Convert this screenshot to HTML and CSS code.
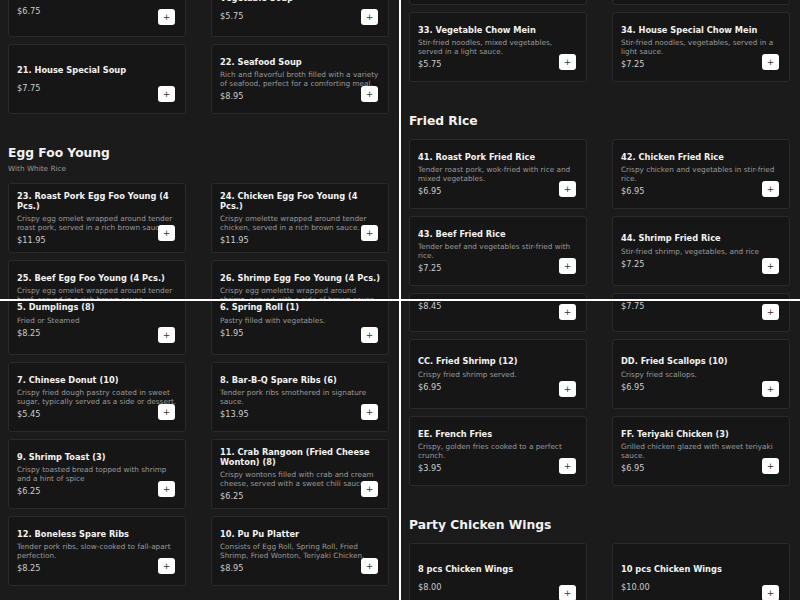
FILE: index.html
```html
<!DOCTYPE html>
<html lang="en">
<head>
  <meta charset="UTF-8" />
  <meta name="viewport" content="width=device-width, initial-scale=1.0" />
  <title>Menu</title>
  <link rel="stylesheet" href="styles.css">
</head>
<body>
  <main class="screens">

    <!-- soups / egg foo young -->
    <section class="screen screen--soup">
      <div class="menu">
        <div class="items">
          <article class="item">
            <h3 class="item-name">19. Hot and Sour Soup</h3>
            <p class="item-price">$6.75</p>
            <button class="add-btn" type="button">+</button>
          </article>
          <article class="item">
            <h3 class="item-name">20. Bean Curd and Mixed Vegetable Soup</h3>
            <p class="item-price">$5.75</p>
            <button class="add-btn" type="button">+</button>
          </article>
          <article class="item">
            <h3 class="item-name">21. House Special Soup</h3>
            <p class="item-price">$7.75</p>
            <button class="add-btn" type="button">+</button>
          </article>
          <article class="item">
            <h3 class="item-name">22. Seafood Soup</h3>
            <p class="item-desc">Rich and flavorful broth filled with a variety of seafood, perfect for a comforting meal.</p>
            <p class="item-price">$8.95</p>
            <button class="add-btn" type="button">+</button>
          </article>
        </div>

        <section class="category">
          <header class="category-head">
            <h2>Egg Foo Young</h2>
            <p class="category-note">With White Rice</p>
          </header>
          <div class="items">
            <article class="item">
              <h3 class="item-name">23. Roast Pork Egg Foo Young (4 Pcs.)</h3>
              <p class="item-desc">Crispy egg omelet wrapped around tender roast pork, served in a rich brown sauce.</p>
              <p class="item-price">$11.95</p>
              <button class="add-btn" type="button">+</button>
            </article>
            <article class="item">
              <h3 class="item-name">24. Chicken Egg Foo Young (4 Pcs.)</h3>
              <p class="item-desc">Crispy omelette wrapped around tender chicken, served in a rich brown sauce.</p>
              <p class="item-price">$11.95</p>
              <button class="add-btn" type="button">+</button>
            </article>
            <article class="item">
              <h3 class="item-name">25. Beef Egg Foo Young (4 Pcs.)</h3>
              <p class="item-desc">Crispy egg omelet wrapped around tender beef, served in a rich brown sauce.</p>
              <p class="item-price">$11.95</p>
              <button class="add-btn" type="button">+</button>
            </article>
            <article class="item">
              <h3 class="item-name">26. Shrimp Egg Foo Young (4 Pcs.)</h3>
              <p class="item-desc">Crispy egg omelette wrapped around shrimp, served with a side of brown sauce.</p>
              <p class="item-price">$12.95</p>
              <button class="add-btn" type="button">+</button>
            </article>
          </div>
        </section>
      </div>
    </section>

    <!-- chow mein / fried rice -->
    <section class="screen screen--chowmein">
      <div class="menu">
        <div class="items">
          <article class="item">
            <h3 class="item-name">31. Beef Chow Mein</h3>
            <p class="item-desc">Stir-fried noodles with tender beef and vegetables.</p>
            <p class="item-price">$7.25</p>
            <button class="add-btn" type="button">+</button>
          </article>
          <article class="item">
            <h3 class="item-name">32. Shrimp Chow Mein</h3>
            <p class="item-desc">Stir-fried noodles with shrimp and vegetables.</p>
            <p class="item-price">$7.25</p>
            <button class="add-btn" type="button">+</button>
          </article>
          <article class="item">
            <h3 class="item-name">33. Vegetable Chow Mein</h3>
            <p class="item-desc">Stir-fried noodles, mixed vegetables, served in a light sauce.</p>
            <p class="item-price">$5.75</p>
            <button class="add-btn" type="button">+</button>
          </article>
          <article class="item">
            <h3 class="item-name">34. House Special Chow Mein</h3>
            <p class="item-desc">Stir-fried noodles, vegetables, served in a light sauce.</p>
            <p class="item-price">$7.25</p>
            <button class="add-btn" type="button">+</button>
          </article>
        </div>

        <section class="category">
          <header class="category-head">
            <h2>Fried Rice</h2>
          </header>
          <div class="items">
            <article class="item">
              <h3 class="item-name">41. Roast Pork Fried Rice</h3>
              <p class="item-desc">Tender roast pork, wok-fried with rice and mixed vegetables.</p>
              <p class="item-price">$6.95</p>
              <button class="add-btn" type="button">+</button>
            </article>
            <article class="item">
              <h3 class="item-name">42. Chicken Fried Rice</h3>
              <p class="item-desc">Crispy chicken and vegetables in stir-fried rice.</p>
              <p class="item-price">$6.95</p>
              <button class="add-btn" type="button">+</button>
            </article>
            <article class="item">
              <h3 class="item-name">43. Beef Fried Rice</h3>
              <p class="item-desc">Tender beef and vegetables stir-fried with rice.</p>
              <p class="item-price">$7.25</p>
              <button class="add-btn" type="button">+</button>
            </article>
            <article class="item">
              <h3 class="item-name">44. Shrimp Fried Rice</h3>
              <p class="item-desc">Stir-fried shrimp, vegetables, and rice</p>
              <p class="item-price">$7.25</p>
              <button class="add-btn" type="button">+</button>
            </article>
            <article class="item">
              <h3 class="item-name">45. House Special Fried Rice</h3>
              <p class="item-price">$7.75</p>
              <button class="add-btn" type="button">+</button>
            </article>
            <article class="item">
              <h3 class="item-name">46. Vegetable Fried Rice</h3>
              <p class="item-price">$5.95</p>
              <button class="add-btn" type="button">+</button>
            </article>
          </div>
        </section>
      </div>
    </section>

    <!-- appetizers -->
    <section class="screen screen--appetizers">
      <div class="menu">
        <div class="items">
          <article class="item">
            <h3 class="item-name">5. Dumplings (8)</h3>
            <p class="item-desc">Fried or Steamed</p>
            <p class="item-price">$8.25</p>
            <button class="add-btn" type="button">+</button>
          </article>
          <article class="item">
            <h3 class="item-name">6. Spring Roll (1)</h3>
            <p class="item-desc">Pastry filled with vegetables.</p>
            <p class="item-price">$1.95</p>
            <button class="add-btn" type="button">+</button>
          </article>
          <article class="item">
            <h3 class="item-name">7. Chinese Donut (10)</h3>
            <p class="item-desc">Crispy fried dough pastry coated in sweet sugar, typically served as a side or dessert.</p>
            <p class="item-price">$5.45</p>
            <button class="add-btn" type="button">+</button>
          </article>
          <article class="item">
            <h3 class="item-name">8. Bar-B-Q Spare Ribs (6)</h3>
            <p class="item-desc">Tender pork ribs smothered in signature sauce.</p>
            <p class="item-price">$13.95</p>
            <button class="add-btn" type="button">+</button>
          </article>
          <article class="item">
            <h3 class="item-name">9. Shrimp Toast (3)</h3>
            <p class="item-desc">Crispy toasted bread topped with shrimp and a hint of spice</p>
            <p class="item-price">$6.25</p>
            <button class="add-btn" type="button">+</button>
          </article>
          <article class="item">
            <h3 class="item-name">11. Crab Rangoon (Fried Cheese Wonton) (8)</h3>
            <p class="item-desc">Crispy wontons filled with crab and cream cheese, served with a sweet chili sauce.</p>
            <p class="item-price">$6.25</p>
            <button class="add-btn" type="button">+</button>
          </article>
          <article class="item">
            <h3 class="item-name">12. Boneless Spare Ribs</h3>
            <p class="item-desc">Tender pork ribs, slow-cooked to fall-apart perfection.</p>
            <p class="item-price">$8.25</p>
            <button class="add-btn" type="button">+</button>
          </article>
          <article class="item">
            <h3 class="item-name">10. Pu Pu Platter</h3>
            <p class="item-desc">Consists of Egg Roll, Spring Roll, Fried Shrimp, Fried Wonton, Teriyaki Chicken.</p>
            <p class="item-price">$8.95</p>
            <button class="add-btn" type="button">+</button>
          </article>
        </div>
      </div>
    </section>

    <!-- side orders / wings -->
    <section class="screen screen--specials">
      <div class="menu">
        <div class="items">
          <article class="item">
            <h3 class="item-name">AA. Chicken Fingers (5)</h3>
            <p class="item-price">$8.45</p>
            <button class="add-btn" type="button">+</button>
          </article>
          <article class="item">
            <h3 class="item-name">BB. Fried Wonton (10)</h3>
            <p class="item-price">$7.75</p>
            <button class="add-btn" type="button">+</button>
          </article>
          <article class="item">
            <h3 class="item-name">CC. Fried Shrimp (12)</h3>
            <p class="item-desc">Crispy fried shrimp served.</p>
            <p class="item-price">$6.95</p>
            <button class="add-btn" type="button">+</button>
          </article>
          <article class="item">
            <h3 class="item-name">DD. Fried Scallops (10)</h3>
            <p class="item-desc">Crispy fried scallops.</p>
            <p class="item-price">$6.95</p>
            <button class="add-btn" type="button">+</button>
          </article>
          <article class="item">
            <h3 class="item-name">EE. French Fries</h3>
            <p class="item-desc">Crispy, golden fries cooked to a perfect crunch.</p>
            <p class="item-price">$3.95</p>
            <button class="add-btn" type="button">+</button>
          </article>
          <article class="item">
            <h3 class="item-name">FF. Teriyaki Chicken (3)</h3>
            <p class="item-desc">Grilled chicken glazed with sweet teriyaki sauce.</p>
            <p class="item-price">$6.95</p>
            <button class="add-btn" type="button">+</button>
          </article>
        </div>

        <section class="category">
          <header class="category-head">
            <h2>Party Chicken Wings</h2>
          </header>
          <div class="items">
            <article class="item">
              <h3 class="item-name">8 pcs Chicken Wings</h3>
              <p class="item-price">$8.00</p>
              <button class="add-btn" type="button">+</button>
            </article>
            <article class="item">
              <h3 class="item-name">10 pcs Chicken Wings</h3>
              <p class="item-price">$10.00</p>
              <button class="add-btn" type="button">+</button>
            </article>
          </div>
        </section>
      </div>
    </section>

  </main>
</body>
</html>
```

FILE: styles.css
```css
* {
  box-sizing: border-box;
}
body {
  margin: 0;
  background-color: #fff;
  font-family: "DejaVu Sans", Verdana, sans-serif;
}
.screens {
  display: grid;
  grid-template-columns: 399px 399px;
  grid-template-rows: 299px 299px;
  gap: 2px;
  width: 800px;
  height: 600px;
  background-color: #fff;
}
.screen {
  background-color: #1b1b1b;
  overflow: hidden;
}
.menu {
  padding-left: 8px;
}
/* where each view is scrolled to */
.screen--soup .menu {
  margin-top: -33px;
}
.screen--chowmein .menu {
  margin-top: -65px;
}
.screen--appetizers .menu {
  margin-top: -16px;
}
.screen--specials .menu {
  margin-top: -39px;
}
.category {
  margin-top: 31.5px;
}
.category-head {
  margin-bottom: 10.5px;
  color: #f2f2f2;
}
.category-head h2 {
  margin: 0;
  font-size: 12.3px;
  line-height: 15px;
  font-weight: bold;
}
.category-note {
  margin: 3px 0 0;
  font-size: 7.3px;
  line-height: 9px;
  color: #999;
}
.items {
  display: grid;
  grid-template-columns: 178px 178px;
  column-gap: 25px;
  row-gap: 7px;
}
.item {
  position: relative;
  min-height: 70px;
  display: flex;
  flex-direction: column;
  justify-content: center;
  padding: 6px 8px;
  background-color: #161616;
  border: 1px solid #2a2a2a;
  border-radius: 3px;
}
.item-name {
  margin: 0;
  font-size: 8.25px;
  line-height: 10px;
  font-weight: bold;
  color: #f2f2f2;
}
.item-desc {
  margin: 3.5px 0 0;
  font-size: 7.3px;
  line-height: 9px;
  color: #999;
}
.item-price {
  margin: 3px 0 0;
  font-size: 8.2px;
  line-height: 10px;
  color: #ccc;
}
.item-name + .item-price {
  margin-top: 8px;
}
.add-btn {
  position: absolute;
  right: 10px;
  bottom: 11px;
  width: 17px;
  height: 16px;
  padding: 0;
  border: 0;
  border-radius: 3px;
  background-color: #fff;
  color: #333;
  font-family: "DejaVu Sans", Verdana, sans-serif;
  font-size: 9px;
  line-height: 16px;
  text-align: center;
}
```
